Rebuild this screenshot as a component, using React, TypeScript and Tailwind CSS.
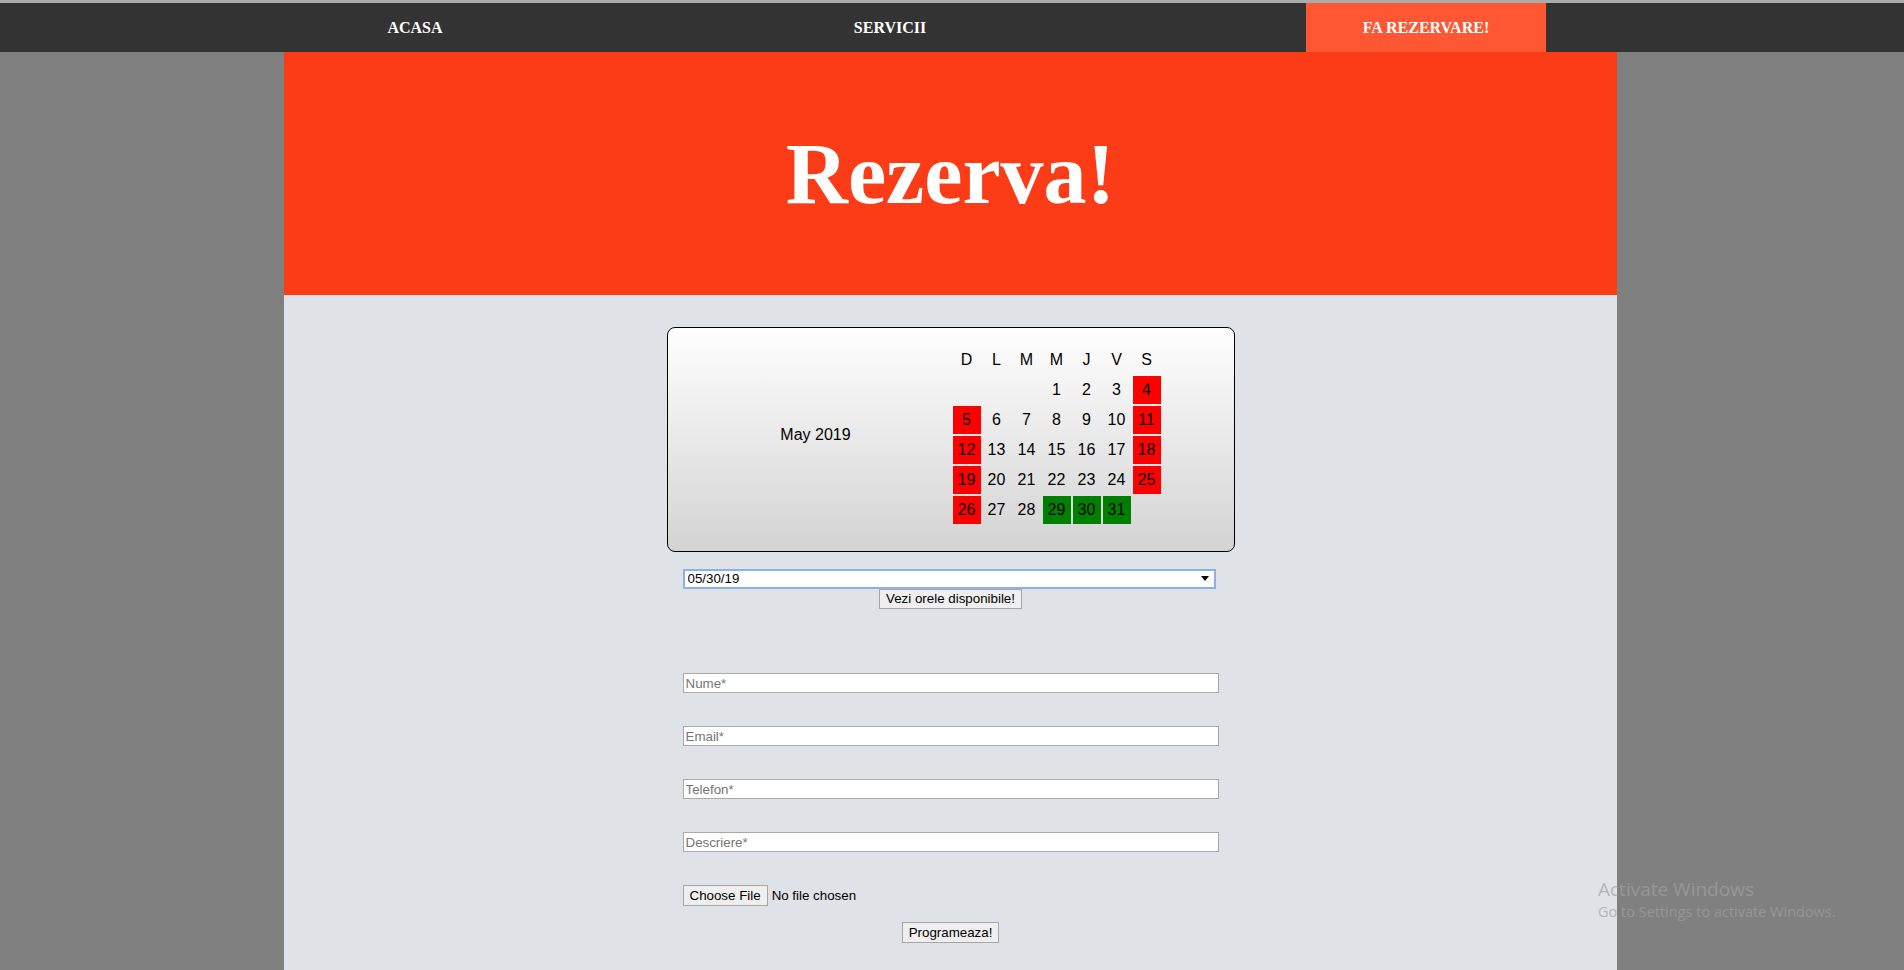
const navItems = [
  { label: 'ACASA', offset: 'ml-[295px]', active: false },
  { label: 'SERVICII', offset: 'ml-[235px]', active: false },
  { label: 'FA REZERVARE!', offset: 'ml-[296px]', active: true },
];

const weekDays = ['D', 'L', 'M', 'M', 'J', 'V', 'S'];

// May 2019 starts on a Wednesday (column M)
const mayDays: (number | null)[] = [
  null, null, null,
  ...Array.from({ length: 31 }, (_, i) => i + 1),
  null,
];

const freeDays = [29, 30, 31];

function cellClass(day: number | null, index: number): string {
  if (day === null) return '';
  const col = index % 7;
  if (col === 0 || col === 6) return 'bg-[#ff0000]';
  if (freeDays.includes(day)) return 'bg-[#008000]';
  return '';
}

const fields = ['Nume*', 'Email*', 'Telefon*', 'Descriere*'];

function Calendar() {
  return (
    <div className="mx-auto mt-8 flex w-[568px] items-center rounded-[8px] border border-black bg-linear-to-b from-white to-[#d3d3d3] pt-[16px] pb-[25px]">
      <div className="w-[283px] pl-[13px] text-center text-base text-black">May 2019</div>
      <div className="grid grid-cols-[repeat(7,28px)] auto-rows-[28px] gap-[2px] p-[2px] text-base text-black">
        {weekDays.map((d, i) => (
          <div key={`h-${i}`} className="flex items-center justify-center">
            {d}
          </div>
        ))}
        {mayDays.map((day, i) => (
          <div key={`d-${i}`} className={`flex items-center justify-center ${cellClass(day, i)}`}>
            {day ?? ''}
          </div>
        ))}
      </div>
    </div>
  );
}

function BookingForm() {
  return (
    <div className="mx-auto w-[536px] text-[13.33px] text-black">
      <div className="relative mt-[17px] w-[533px]">
        <select
          defaultValue="05/30/19"
          className="block h-[20px] w-full appearance-none border-2 border-[#8cb0ea] bg-white pl-[3px] leading-none text-black outline-none"
        >
          <option value="05/30/19">05/30/19</option>
        </select>
        <svg className="pointer-events-none absolute top-[7px] right-[7px]" width="8" height="5" viewBox="0 0 8 5">
          <path d="M0 0h8L4 5z" fill="#000" />
        </svg>
      </div>
      <button className="mx-auto block h-[20px] border border-[#a6a6a6] bg-[#efefef] px-[6px] leading-none text-black">
        Vezi orele disponibile!
      </button>

      <div className="mt-[64px] flex flex-col gap-[33px]">
        {fields.map((f) => (
          <input
            key={f}
            type="text"
            placeholder={f}
            className="block h-[20px] w-full border border-[#a9a9a9] bg-white px-[2px] text-black outline-none placeholder:text-[#757575]"
          />
        ))}
        <div className="flex h-[21px] items-center">
          <button className="h-[21px] border border-[#a6a6a6] bg-[#efefef] px-[6px] leading-none text-black">
            Choose File
          </button>
          <span className="ml-[4px]">No file chosen</span>
        </div>
      </div>

      <button className="mx-auto mt-[16px] block h-[21px] border border-[#a6a6a6] bg-[#efefef] px-[6px] leading-none text-black">
        Programeaza!
      </button>
    </div>
  );
}

export default function App() {
  return (
    <div className="relative flex min-h-[970px] flex-col overflow-hidden bg-[#808080] font-['Liberation_Sans',Arial,sans-serif]">
      <div className="h-[3px] bg-[#ababab]" />
      <nav className="flex h-[49px] bg-[#333333] font-['Liberation_Serif','Times_New_Roman',serif] text-base font-bold text-white">
        {navItems.map((item) => (
          <a
            key={item.label}
            href="#"
            className={`${item.offset} flex w-[240px] items-center justify-center ${item.active ? 'bg-[#ff5733]' : ''}`}
          >
            {item.label}
          </a>
        ))}
      </nav>

      <main className="ml-[284px] flex w-[1333px] flex-1 flex-col bg-[#dfe3e7]">
        <header className="flex h-[243px] items-center justify-center bg-[#fc3c16]">
          <h1 className="font-['Liberation_Serif','Times_New_Roman',serif] text-[86px] leading-none font-bold text-white">
            Rezerva!
          </h1>
        </header>
        <Calendar />
        <BookingForm />
      </main>

      <div className="pointer-events-none absolute top-[877px] left-[1598px] font-['Open_Sans','Noto_Sans',sans-serif] text-[rgba(160,160,160,0.7)]">
        <p className="text-[19px] leading-[25px]">Activate Windows</p>
        <p className="text-[14.5px] leading-[19px]">Go to Settings to activate Windows.</p>
      </div>
    </div>
  );
}
